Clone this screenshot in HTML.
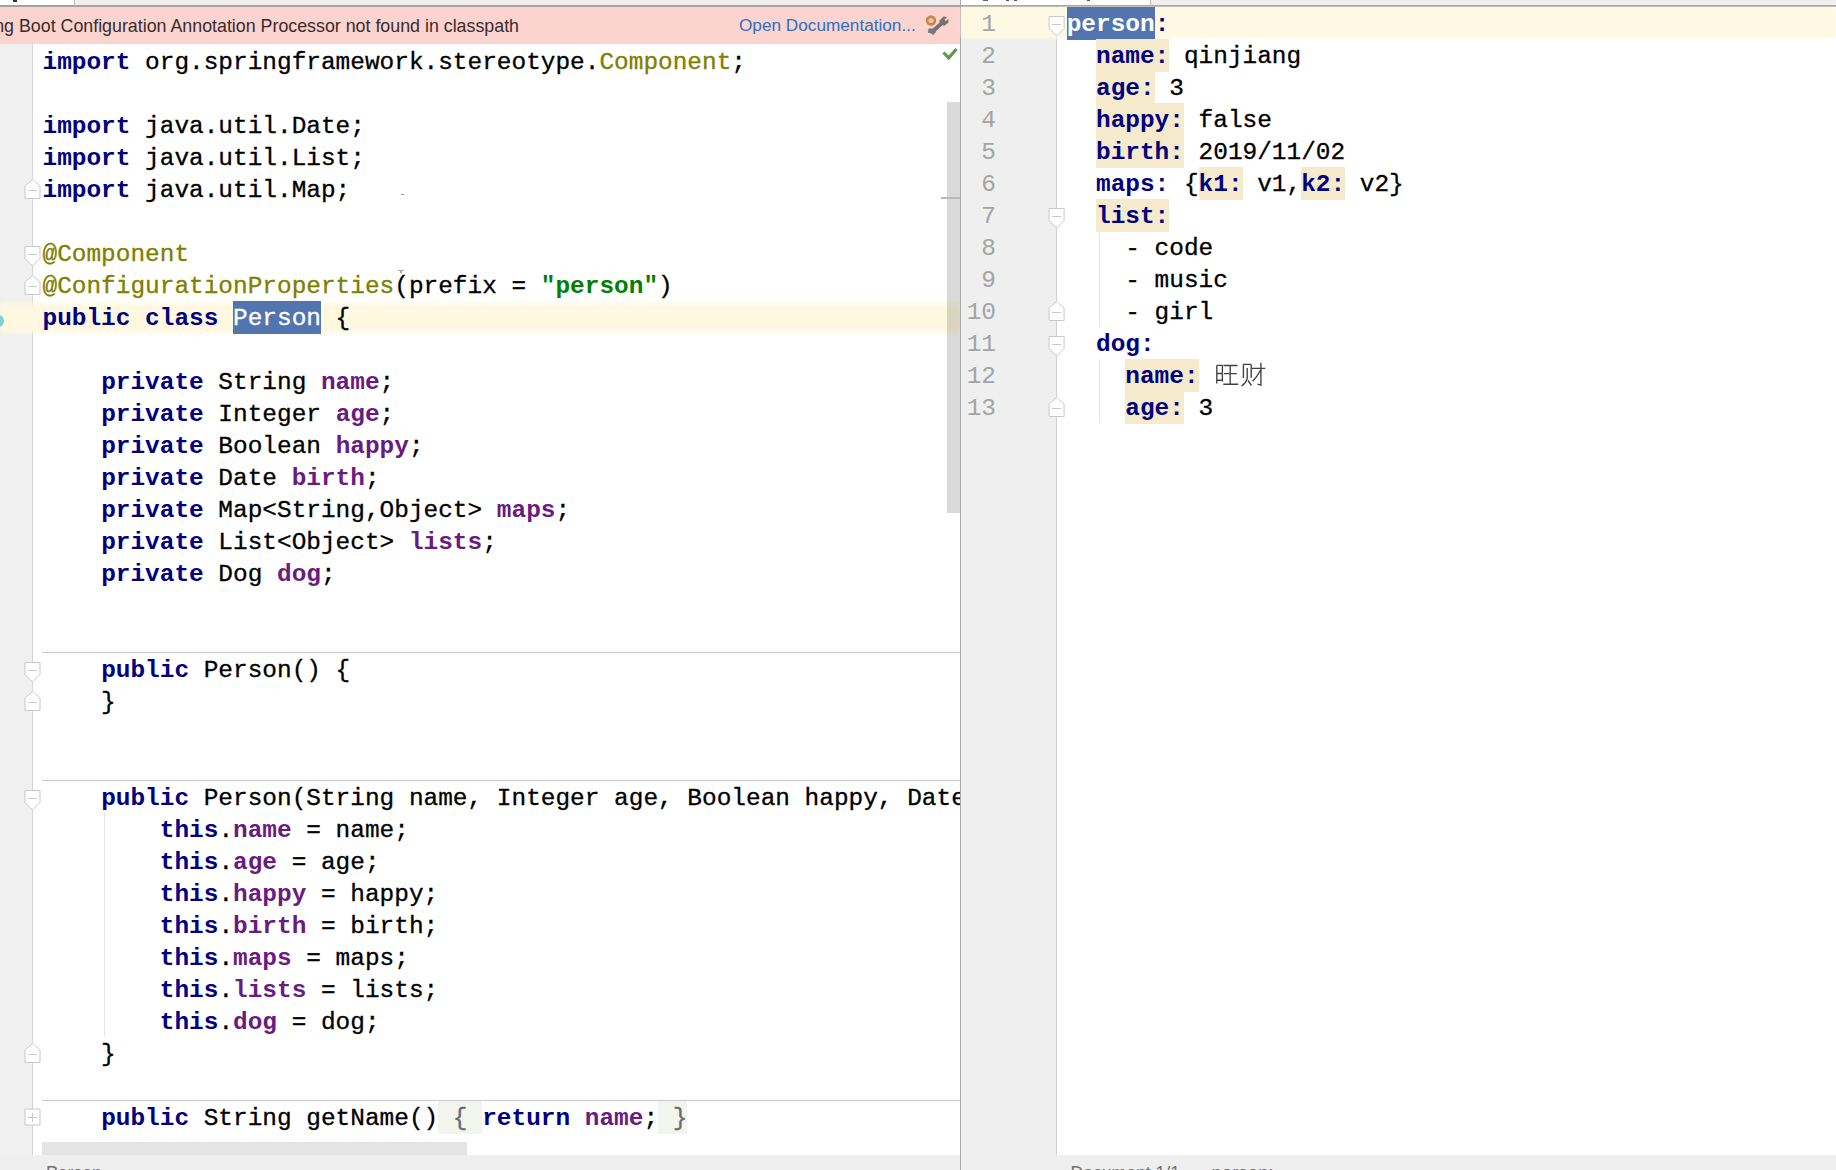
<!DOCTYPE html>
<html><head><meta charset="utf-8"><style>
*{margin:0;padding:0;box-sizing:border-box}
html,body{width:1836px;height:1170px;overflow:hidden;background:#fff}
body{position:relative;font-family:"Liberation Mono",monospace}
.abs{position:absolute}
.ln{position:absolute;height:32px;line-height:32px;white-space:pre;font-size:24.43px;color:#000}
.ln{-webkit-text-stroke:0.3px currentColor}
.ln b{font-weight:bold;-webkit-text-stroke:0}
.k{color:#000080}
.f{color:#6a1b80}
.fold{color:#6b6b6b;background:#f1f5ee;padding:4.17px 0 2.17px}
.a{color:#808000}
.s{color:#008000}
.yk{color:#000080}
.hl{background:#f5eacb;padding:4.17px 0 2.17px}
.sel{background:#5275b0;color:#fff;padding:4.17px 0 2.17px}
.bt{font-family:'Liberation Sans',sans-serif;font-size:17.6px;line-height:20px;white-space:nowrap}
.num{position:absolute;height:32px;line-height:32px;font-size:24.43px;color:#a4a4a4;text-align:right;font-family:"Liberation Mono",monospace}
</style></head>
<body>
<div class="abs" style="left:0;top:0;width:1836px;height:7px;background:#f1eff0"></div>
<div class="abs" style="left:0;top:0;width:74px;height:5px;background:#fff"></div>
<div class="abs" style="left:961px;top:0;width:189px;height:5px;background:#fff"></div>
<div class="abs" style="left:0;top:5px;width:1836px;height:2px;background:#a2a2a0"></div>
<div class="abs" style="left:0;top:44px;width:32px;height:1126px;background:#f0f0f0"></div>
<div class="abs" style="left:32px;top:44px;width:1px;height:1126px;background:#d5d5d5"></div>
<div class="abs" style="left:0;top:303px;width:960px;height:30px;background:#fff8e0;filter:blur(2.5px)"></div>
<div class="abs" style="left:42px;top:652px;width:918px;height:1px;background:#c8c8c8"></div>
<div class="abs" style="left:42px;top:780px;width:918px;height:1px;background:#c8c8c8"></div>
<div class="abs" style="left:42px;top:1100px;width:918px;height:1px;background:#c8c8c8"></div>
<div class="abs" style="left:0;top:0;width:960px;height:1170px;overflow:hidden">
<div class="ln" style="left:42.5px;top:47px"><b class="k">import</b> org.springframework.stereotype.<span class="a">Component</span>;</div>
<div class="ln" style="left:42.5px;top:111px"><b class="k">import</b> java.util.Date;</div>
<div class="ln" style="left:42.5px;top:143px"><b class="k">import</b> java.util.List;</div>
<div class="ln" style="left:42.5px;top:175px"><b class="k">import</b> java.util.Map;</div>
<div class="ln" style="left:42.5px;top:239px"><span class="a">@Component</span></div>
<div class="ln" style="left:42.5px;top:271px"><span class="a">@ConfigurationProperties</span>(prefix = <b class="s">"person"</b>)</div>
<div class="ln" style="left:42.5px;top:303px"><b class="k">public</b> <b class="k">class</b> <span class="sel">Person</span> {</div>
<div class="ln" style="left:42.5px;top:367px">    <b class="k">private</b> String <b class="f">name</b>;</div>
<div class="ln" style="left:42.5px;top:399px">    <b class="k">private</b> Integer <b class="f">age</b>;</div>
<div class="ln" style="left:42.5px;top:431px">    <b class="k">private</b> Boolean <b class="f">happy</b>;</div>
<div class="ln" style="left:42.5px;top:463px">    <b class="k">private</b> Date <b class="f">birth</b>;</div>
<div class="ln" style="left:42.5px;top:495px">    <b class="k">private</b> Map&lt;String,Object&gt; <b class="f">maps</b>;</div>
<div class="ln" style="left:42.5px;top:527px">    <b class="k">private</b> List&lt;Object&gt; <b class="f">lists</b>;</div>
<div class="ln" style="left:42.5px;top:559px">    <b class="k">private</b> Dog <b class="f">dog</b>;</div>
<div class="ln" style="left:42.5px;top:655px">    <b class="k">public</b> Person() {</div>
<div class="ln" style="left:42.5px;top:687px">    }</div>
<div class="ln" style="left:42.5px;top:783px">    <b class="k">public</b> Person(String name, Integer age, Boolean happy, Date birth, Map&lt;String,Object&gt; maps</div>
<div class="ln" style="left:42.5px;top:815px">        <b class="k">this</b>.<b class="f">name</b> = name;</div>
<div class="ln" style="left:42.5px;top:847px">        <b class="k">this</b>.<b class="f">age</b> = age;</div>
<div class="ln" style="left:42.5px;top:879px">        <b class="k">this</b>.<b class="f">happy</b> = happy;</div>
<div class="ln" style="left:42.5px;top:911px">        <b class="k">this</b>.<b class="f">birth</b> = birth;</div>
<div class="ln" style="left:42.5px;top:943px">        <b class="k">this</b>.<b class="f">maps</b> = maps;</div>
<div class="ln" style="left:42.5px;top:975px">        <b class="k">this</b>.<b class="f">lists</b> = lists;</div>
<div class="ln" style="left:42.5px;top:1007px">        <b class="k">this</b>.<b class="f">dog</b> = dog;</div>
<div class="ln" style="left:42.5px;top:1039px">    }</div>
<div class="ln" style="left:42.5px;top:1103px">    <b class="k">public</b> String getName()<span class="fold"> { </span><b class="k">return</b> <b class="f">name</b>;<span class="fold"> }</span></div>
</div>
<div class="abs" style="left:0;top:7px;width:960px;height:37px;background:#fbd4cf;overflow:hidden"><div class="abs bt" style="left:-37.5px;top:9px;color:#3a2c2c;font-size:17.82px">Spring Boot Configuration Annotation Processor not found in classpath</div><div class="abs bt" style="left:739px;top:8.4px;color:#2f6fc0;font-size:17.2px">Open Documentation...</div></div>
<div class="abs" style="left:947px;top:102px;width:13px;height:411px;background:rgba(0,0,0,0.145)"></div>
<div class="abs" style="left:941px;top:197px;width:19px;height:2px;background:#b8b8b8"></div>
<div class="abs" style="left:0;top:1155px;width:960px;height:15px;background:#efefef"></div>
<div class="abs" style="left:42px;top:1142px;width:425px;height:13px;background:#e4e4e4"></div>
<div class="abs" style="left:960px;top:0;width:1px;height:1170px;background:#a8a8a8"></div>
<div class="abs" style="left:961px;top:7px;width:96px;height:1163px;background:#efefef"></div>
<div class="abs" style="left:1056px;top:7px;width:1px;height:1148px;background:#d0d0d0"></div>
<div class="abs" style="left:961px;top:7px;width:875px;height:31px;background:#fff9e3;filter:blur(1px)"></div>
<div class="num" style="left:961px;width:35px;top:9px">1</div>
<div class="num" style="left:961px;width:35px;top:41px">2</div>
<div class="num" style="left:961px;width:35px;top:73px">3</div>
<div class="num" style="left:961px;width:35px;top:105px">4</div>
<div class="num" style="left:961px;width:35px;top:137px">5</div>
<div class="num" style="left:961px;width:35px;top:169px">6</div>
<div class="num" style="left:961px;width:35px;top:201px">7</div>
<div class="num" style="left:961px;width:35px;top:233px">8</div>
<div class="num" style="left:961px;width:35px;top:265px">9</div>
<div class="num" style="left:961px;width:35px;top:297px">10</div>
<div class="num" style="left:961px;width:35px;top:329px">11</div>
<div class="num" style="left:961px;width:35px;top:361px">12</div>
<div class="num" style="left:961px;width:35px;top:393px">13</div>
<div class="ln" style="left:1066.7px;top:9px"><b class="yk sel">person</b><b class="yk">:</b></div>
<div class="ln" style="left:1066.7px;top:41px">  <b class="yk hl">name:</b> qinjiang</div>
<div class="ln" style="left:1066.7px;top:73px">  <b class="yk hl">age:</b> 3</div>
<div class="ln" style="left:1066.7px;top:105px">  <b class="yk hl">happy:</b> false</div>
<div class="ln" style="left:1066.7px;top:137px">  <b class="yk hl">birth:</b> 2019/11/02</div>
<div class="ln" style="left:1066.7px;top:169px">  <b class="yk">maps:</b> {<b class="yk hl">k1:</b> v1,<b class="yk hl">k2:</b> v2}</div>
<div class="ln" style="left:1066.7px;top:201px">  <b class="yk hl">list:</b></div>
<div class="ln" style="left:1066.7px;top:233px">    - code</div>
<div class="ln" style="left:1066.7px;top:265px">    - music</div>
<div class="ln" style="left:1066.7px;top:297px">    - girl</div>
<div class="ln" style="left:1066.7px;top:329px">  <b class="yk">dog:</b></div>
<div class="ln" style="left:1066.7px;top:361px">    <b class="yk hl">name:</b> </div>
<div class="ln" style="left:1066.7px;top:393px">    <b class="yk hl">age:</b> 3</div>
<div class="abs" style="left:961px;top:1155px;width:875px;height:15px;background:#efefef"></div>
<svg class="abs" style="left:0;top:0;overflow:visible" width="1" height="1"><path d="M32.5 179.5L40.0 186V198.5H25.0V186Z" fill="#fff" stroke="#c9c9c9" stroke-width="1"/><path d="M28.0 190.5H37.0" stroke="#c9c9c9" stroke-width="1"/></svg>
<svg class="abs" style="left:0;top:0;overflow:visible" width="1" height="1"><path d="M32.5 275.5L40.0 282V294.5H25.0V282Z" fill="#fff" stroke="#c9c9c9" stroke-width="1"/><path d="M28.0 286.5H37.0" stroke="#c9c9c9" stroke-width="1"/></svg>
<svg class="abs" style="left:0;top:0;overflow:visible" width="1" height="1"><path d="M32.5 691.5L40.0 698V710.5H25.0V698Z" fill="#fff" stroke="#c9c9c9" stroke-width="1"/><path d="M28.0 702.5H37.0" stroke="#c9c9c9" stroke-width="1"/></svg>
<svg class="abs" style="left:0;top:0;overflow:visible" width="1" height="1"><path d="M32.5 1043.5L40.0 1050V1062.5H25.0V1050Z" fill="#fff" stroke="#c9c9c9" stroke-width="1"/><path d="M28.0 1054.5H37.0" stroke="#c9c9c9" stroke-width="1"/></svg>
<svg class="abs" style="left:0;top:0;overflow:visible" width="1" height="1"><path d="M25.0 246.5H40.0V258.5L32.5 266L25.0 258.5Z" fill="#fff" stroke="#c9c9c9" stroke-width="1"/><path d="M28.0 254.5H37.0" stroke="#c9c9c9" stroke-width="1"/></svg>
<svg class="abs" style="left:0;top:0;overflow:visible" width="1" height="1"><path d="M25.0 662.5H40.0V674.5L32.5 682L25.0 674.5Z" fill="#fff" stroke="#c9c9c9" stroke-width="1"/><path d="M28.0 670.5H37.0" stroke="#c9c9c9" stroke-width="1"/></svg>
<svg class="abs" style="left:0;top:0;overflow:visible" width="1" height="1"><path d="M25.0 790.5H40.0V802.5L32.5 810L25.0 802.5Z" fill="#fff" stroke="#c9c9c9" stroke-width="1"/><path d="M28.0 798.5H37.0" stroke="#c9c9c9" stroke-width="1"/></svg>
<svg class="abs" style="left:0;top:0;overflow:visible" width="1" height="1"><path d="M25.0 1109h15v16h-15Z" fill="#fff" stroke="#c9c9c9" stroke-width="1"/><path d="M28.0 1117.5H37.0M32.5 1113V1122" stroke="#c9c9c9" stroke-width="1"/></svg>
<div class="abs" style="left:104px;top:813px;width:1px;height:224px;background:#e6e6e6"></div>
<div class="abs" style="left:-7px;top:315px;width:11px;height:12px;border-radius:50%;background:#7ecfd6"></div>
<svg class="abs" style="left:920px;top:10px" width="32" height="30" viewBox="0 0 32 30"><path d="M12 22 L22.5 12.5" stroke="#7b7070" stroke-width="4" stroke-linecap="round"/><path d="M19 11 L23.5 6.5 L27 7 L24.5 9.8 L25.8 11.2 L28.3 8.8 L28.5 12.5 L24 16 Z" fill="#7b7070"/><circle cx="11" cy="10.5" r="3.9" fill="#efc3a6" stroke="#c4874e" stroke-width="2.6"/><path d="M8.5 18.5 L16 18.5 L15.5 23 L8 23 Z" fill="#787880"/><path d="M11.5 23 L15 23 L13 25.5 Z" fill="#b06a5a"/></svg>
<svg class="abs" style="left:940px;top:45px" width="20" height="18" viewBox="0 0 20 18"><path d="M3.5 7.5 L8.7 12.8 L16.5 4" fill="none" stroke="#5b9b48" stroke-width="3.2"/></svg>
<svg class="abs" style="left:0;top:0;overflow:visible" width="1" height="1"><path d="M1049.1 16.5H1064.1V28.5L1056.6 36L1049.1 28.5Z" fill="#fff" stroke="#c9c9c9" stroke-width="1"/><path d="M1052.1 24.5H1061.1" stroke="#c9c9c9" stroke-width="1"/></svg>
<svg class="abs" style="left:0;top:0;overflow:visible" width="1" height="1"><path d="M1049.1 208.5H1064.1V220.5L1056.6 228L1049.1 220.5Z" fill="#fff" stroke="#c9c9c9" stroke-width="1"/><path d="M1052.1 216.5H1061.1" stroke="#c9c9c9" stroke-width="1"/></svg>
<svg class="abs" style="left:0;top:0;overflow:visible" width="1" height="1"><path d="M1049.1 336.5H1064.1V348.5L1056.6 356L1049.1 348.5Z" fill="#fff" stroke="#c9c9c9" stroke-width="1"/><path d="M1052.1 344.5H1061.1" stroke="#c9c9c9" stroke-width="1"/></svg>
<svg class="abs" style="left:0;top:0;overflow:visible" width="1" height="1"><path d="M1056.6 301.5L1064.1 308V320.5H1049.1V308Z" fill="#fff" stroke="#c9c9c9" stroke-width="1"/><path d="M1052.1 312.5H1061.1" stroke="#c9c9c9" stroke-width="1"/></svg>
<svg class="abs" style="left:0;top:0;overflow:visible" width="1" height="1"><path d="M1056.6 397.5L1064.1 404V416.5H1049.1V404Z" fill="#fff" stroke="#c9c9c9" stroke-width="1"/><path d="M1052.1 408.5H1061.1" stroke="#c9c9c9" stroke-width="1"/></svg>
<div class="abs" style="left:1099px;top:231px;width:1px;height:96px;background:#e6e6e6"></div>
<div class="abs" style="left:1099px;top:359px;width:1px;height:64px;background:#e6e6e6"></div>
<svg class="abs" style="left:0;top:0;overflow:visible" width="1" height="1"><g fill="none" stroke="#404040" stroke-width="1.35" stroke-linecap="butt"><path d="M1216.8 365.2V383.6M1222.4 365.2V381.5M1216.8 365.4H1222.4M1216.8 373.5H1222.4M1216.8 380.2H1222.4"/><path d="M1223.5 365.5H1237.5M1224 373.6H1236.8M1223.3 384.2H1238.3M1230.2 365.5V384.2"/><path d="M1243.4 364.3V378M1243.4 364.4H1251.2M1251.2 364.4V377.7M1247.2 368V378.5Q1246 383 1241.5 386M1248 380.5L1251.5 385.5"/><path d="M1251.5 368.3H1265.2M1260.9 362.8V385.2L1257.6 384.2M1260.5 370.2Q1257 377 1252.6 381.3"/></g></svg>
<div class="abs" style="left:13px;top:0;width:4px;height:1.5px;background:#333"></div>
<div class="abs" style="left:401px;top:194px;width:3px;height:1px;background:#999"></div>
<div class="abs" style="left:398px;top:270px;width:6px;height:1px;background:#aaa"></div>
<div class="abs" style="left:400px;top:271px;width:2px;height:2px;background:#aaa"></div>
<div class="abs" style="left:983px;top:0;width:5px;height:1px;background:#666"></div>
<div class="abs" style="left:1006px;top:0;width:3px;height:1px;background:#555"></div>
<div class="abs" style="left:1014px;top:0;width:3px;height:1px;background:#555"></div>
<div class="abs" style="left:1087px;top:0;width:3px;height:1px;background:#555"></div>
<div class="abs" style="left:74px;top:0;width:1px;height:6px;background:#bbb"></div>
<div class="abs" style="left:1150px;top:0;width:1px;height:6px;background:#bbb"></div>
<div class="abs" style="left:0;top:1155px;width:960px;height:15px;overflow:hidden"><div class="abs bt" style="left:46px;top:8px;color:#707070;font-size:17.6px">Person</div></div>
<div class="abs" style="left:961px;top:1155px;width:875px;height:15px;overflow:hidden"><div class="abs bt" style="left:109.5px;top:8px;color:#707070;font-size:17.6px">Document 1/1</div><div class="abs bt" style="left:231px;top:8px;color:#707070;font-size:19px">›</div><div class="abs bt" style="left:250.5px;top:8px;color:#707070;font-size:18.6px">person:</div></div>
</body></html>
